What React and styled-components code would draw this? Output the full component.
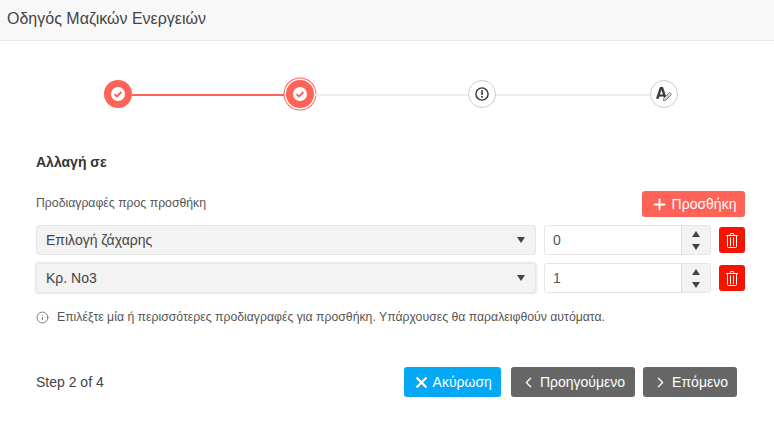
import React from 'react'
import styled, { createGlobalStyle } from 'styled-components'
import { Plus, X, ChevronLeft, ChevronRight, Info } from 'lucide-react'

const specs = [
  { name: 'Επιλογή ζάχαρης', qty: 0 },
  { name: 'Κρ. Νο3', qty: 1, focused: true },
]

function CheckBadge() {
  return (
    <svg width="14" height="14" viewBox="0 0 14 14">
      <circle cx="7" cy="7" r="7" fill="#fff" />
      <path d="M3.6 7.2 6 9.4 10.4 5" fill="none" stroke="#ff6257" strokeWidth="2" />
    </svg>
  )
}

function AlertIcon() {
  return (
    <svg width="14" height="14" viewBox="0 0 14 14">
      <circle cx="7" cy="7" r="6.1" fill="none" stroke="#333" strokeWidth="1.4" />
      <rect x="6.2" y="3.2" width="1.6" height="4.8" fill="#333" />
      <rect x="6.2" y="9" width="1.6" height="1.7" fill="#333" />
    </svg>
  )
}

function SignIcon() {
  return (
    <svg width="16" height="14" viewBox="0 0 16 14">
      <path
        fillRule="evenodd"
        d="M0 11.8 3.9 0H7L10.9 11.8H8.2L7.5 9.6H3.4L2.7 11.8ZM4 7.4H6.9L5.45 2.8Z"
        fill="#3a3a3a"
      />
      <path d="M7.4 13.6 8 11 13.6 5.4 15.6 7.4 10 13Z" fill="#fff" stroke="#666" strokeWidth="0.9" />
      <path d="M8.8 11.6 13.6 6.8M9.5 12.3 14.3 7.5" stroke="#777" strokeWidth="0.5" />
    </svg>
  )
}

function TrashIcon() {
  return (
    <svg width="12" height="15" viewBox="0 0 12 15">
      <path d="M0 2.5H12M4 2.5 4.5 .5H7.5L8 2.5" fill="none" stroke="#fff" strokeWidth="1" />
      <path
        d="M1.5 3V13.5C1.5 14.1 1.9 14.5 2.5 14.5H9.5C10.1 14.5 10.5 14.1 10.5 13.5V3M4.5 4.5V13M7.5 4.5V13"
        fill="none"
        stroke="#fff"
        strokeWidth="1"
      />
    </svg>
  )
}

export default function App() {
  return (
    <Page>
      <GlobalStyle />
      <Header>Οδηγός Μαζικών Ενεργειών</Header>

      <Stepper>
        <Step $done><CheckBadge /></Step>
        <Line $done />
        <Step $done $current><CheckBadge /></Step>
        <Line />
        <Step><AlertIcon /></Step>
        <Line />
        <Step><SignIcon /></Step>
      </Stepper>

      <Body>
        <SectionTitle>Αλλαγή σε</SectionTitle>
        <LabelRow>
          <FieldLabel>Προδιαγραφές προς προσθήκη</FieldLabel>
          <AddButton><Plus size={17} strokeWidth={2.6} />Προσθήκη</AddButton>
        </LabelRow>

        {specs.map((spec) => (
          <SpecRow key={spec.name}>
            <SelectBox $focused={spec.focused}>
              {spec.name}
              <Caret />
            </SelectBox>
            <NumberBox>
              <NumberValue>{spec.qty}</NumberValue>
              <Spinner>
                <ArrowUp />
                <ArrowDown />
              </Spinner>
            </NumberBox>
            <DeleteButton><TrashIcon /></DeleteButton>
          </SpecRow>
        ))}

        <Hint>
          <Info size={13} strokeWidth={1.4} />
          Επιλέξτε μία ή περισσότερες προδιαγραφές για προσθήκη. Υπάρχουσες θα παραλειφθούν αυτόματα.
        </Hint>
      </Body>

      <Footer>
        <StepCount>Step 2 of 4</StepCount>
        <FooterButtons>
          <NavButton $primary><X size={17} strokeWidth={3.2} />Ακύρωση</NavButton>
          <NavButton $wide><ChevronLeft size={17} strokeWidth={1.8} />Προηγούμενο</NavButton>
          <NavButton><ChevronRight size={17} strokeWidth={1.8} />Επόμενο</NavButton>
        </FooterButtons>
      </Footer>
    </Page>
  )
}

// === Styles === //
const GlobalStyle = createGlobalStyle`
  body {
    margin: 0;
    background: #fff;
    font-family: "Liberation Sans", Arial, sans-serif;
  }
`

const Page = styled.div`
  width: 774px;
  height: 447px;
  overflow: hidden;
`

const Header = styled.div`
  height: 40px;
  box-sizing: content-box;
  background: #f8f8f8;
  border-bottom: 1px solid #e7e7e7;
  padding-left: 7px;
  line-height: 37px;
  font-size: 16px;
  color: #444;
`

const Stepper = styled.div`
  display: flex;
  align-items: center;
  padding: 39px 96px 0 104px;
`

const Step = styled.div`
  flex: none;
  width: 28px;
  height: 28px;
  box-sizing: border-box;
  border-radius: 50%;
  display: flex;
  align-items: center;
  justify-content: center;
  background: ${(p) => (p.$done ? '#ff6257' : '#fff')};
  border: ${(p) => (p.$done ? 'none' : '1px solid #ccc')};
  box-shadow: ${(p) => (p.$current ? '0 0 0 1.5px #fff, 0 0 0 2.5px #ff6257' : 'none')};
`

const Line = styled.div`
  flex: 1;
  height: 2px;
  margin-top: 1px;
  background: ${(p) => (p.$done ? '#ff6257' : '#ececec')};
`

const Body = styled.div`
  padding: 46px 29px 0 36px;
`

const SectionTitle = styled.div`
  font-size: 14px;
  font-weight: bold;
  color: #333;
  line-height: 16px;
`

const LabelRow = styled.div`
  display: flex;
  justify-content: space-between;
  align-items: center;
  margin-top: 21px;
  margin-bottom: 8px;
`

const FieldLabel = styled.div`
  font-size: 12.25px;
  color: #555;
  padding-bottom: 2px;
`

const AddButton = styled.button`
  width: 103px;
  height: 26px;
  padding: 0;
  border: none;
  border-radius: 3px;
  background: #ff6257;
  color: #fff;
  font: 14px "Liberation Sans", Arial, sans-serif;
  display: flex;
  align-items: center;
  justify-content: center;
  gap: 4px;
`

const SpecRow = styled.div`
  display: flex;
  align-items: center;
  height: 30px;
  margin-bottom: 8px;
`

const SelectBox = styled.div`
  width: 500px;
  height: 30px;
  box-sizing: border-box;
  padding: 0 10px 0 9px;
  background: #f3f3f3;
  border: 1px solid #e6e6e6;
  border-radius: 3px;
  box-shadow: ${(p) => (p.$focused ? '0 0 2px 1px #e8e8e8' : 'none')};
  font-size: 14px;
  color: #444;
  display: flex;
  align-items: center;
  justify-content: space-between;
`

const Caret = styled.span`
  width: 0;
  height: 0;
  border-left: 4px solid transparent;
  border-right: 4px solid transparent;
  border-top: 6px solid #444;
`

const NumberBox = styled.div`
  width: 167px;
  height: 30px;
  margin-left: 8px;
  box-sizing: border-box;
  border: 1px solid #e6e6e6;
  border-radius: 3px;
  display: flex;
  overflow: hidden;
`

const NumberValue = styled.div`
  flex: 1;
  padding-left: 8px;
  font-size: 14px;
  line-height: 28px;
  color: #555;
`

const Spinner = styled.div`
  width: 28px;
  background: #f3f3f3;
  border-left: 1px solid #dcdcdc;
  display: flex;
  flex-direction: column;
  align-items: center;
  justify-content: center;
  gap: 7px;
`

const ArrowUp = styled.span`
  width: 0;
  height: 0;
  border-left: 4px solid transparent;
  border-right: 4px solid transparent;
  border-bottom: 6px solid #444;
`

const ArrowDown = styled.span`
  width: 0;
  height: 0;
  border-left: 4px solid transparent;
  border-right: 4px solid transparent;
  border-top: 6px solid #444;
`

const DeleteButton = styled.button`
  width: 26px;
  height: 26px;
  margin-left: 8px;
  padding: 0;
  border: none;
  border-radius: 3px;
  background: #f51400;
  color: #fff;
  display: flex;
  align-items: center;
  justify-content: center;
`

const Hint = styled.div`
  display: flex;
  align-items: center;
  gap: 8px;
  margin-top: 17px;
  font-size: 12.25px;
  color: #555;
`

const Footer = styled.div`
  display: flex;
  align-items: center;
  justify-content: space-between;
  padding: 43px 37px 0 36px;
`

const StepCount = styled.div`
  font-size: 14px;
  color: #444;
`

const FooterButtons = styled.div`
  display: flex;
  gap: 8px;
`

const NavButton = styled.button`
  height: 30px;
  padding: 0 ${(p) => (p.$wide ? '10px' : '9px')} 0 9px;
  margin-right: ${(p) => (p.$primary ? '2px' : '0')};
  border: none;
  border-radius: 3px;
  background: ${(p) => (p.$primary ? '#03a9f4' : '#666')};
  color: #fff;
  font: 14px "Liberation Sans", Arial, sans-serif;
  display: flex;
  align-items: center;
  gap: 3px;
`
